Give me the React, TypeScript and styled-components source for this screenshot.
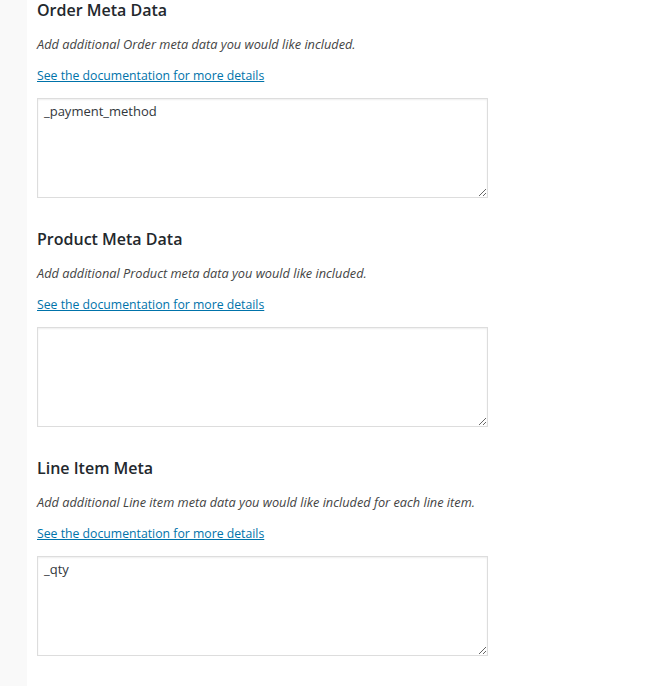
import React from "react";
import styled, {createGlobalStyle} from "styled-components";

const GlobalStyle = createGlobalStyle`
  html, body {
    margin: 0;
    padding: 0;
    background: #fff;
  }
  body {
    font-family: "Open Sans", "Noto Sans", sans-serif;
    color: #444;
  }
`;

type MetaSection = {
  title: string;
  description: string;
  value: string;
};

const sections: MetaSection[] = [
  {
    title: "Order Meta Data",
    description: "Add additional Order meta data you would like included.",
    value: "_payment_method",
  },
  {
    title: "Product Meta Data",
    description: "Add additional Product meta data you would like included.",
    value: "",
  },
  {
    title: "Line Item Meta",
    description:
      "Add additional Line item meta data you would like included for each line item.",
    value: "_qty",
  },
];

export default function App() {
  return (
    <>
      <GlobalStyle />
      <Page>
        <Sidebar />
        <Content>
          {sections.map((s) => (
            <Section key={s.title}>
              <Title>{s.title}</Title>
              <Description>{s.description}</Description>
              <DocLink href="#">See the documentation for more details</DocLink>
              <MetaField defaultValue={s.value} />
            </Section>
          ))}
        </Content>
      </Page>
    </>
  );
}

const Page = styled.div`
  display: flex;
  min-height: 686px;
`;

const Sidebar = styled.div`
  width: 27px;
  flex-shrink: 0;
  background: #f9f9f9;
`;

const Content = styled.div`
  flex: 1;
  padding: 0 0 0 10px;
  display: flex;
  flex-direction: column;
  gap: 31px;
`;

const Section = styled.div`
  display: flex;
  flex-direction: column;
  align-items: flex-start;
`;

const Title = styled.h2`
  margin: 0;
  font-size: 16px;
  line-height: 20px;
  font-weight: 600;
  color: #23282d;
`;

const Description = styled.p`
  margin: 14px 0 0;
  font-size: 12.75px;
  line-height: 20px;
  font-style: italic;
  color: #444;
`;

const DocLink = styled.a`
  margin-top: 12px;
  font-size: 12.25px;
  line-height: 20px;
  color: #0073aa;
  text-decoration: underline;
`;

const MetaField = styled.textarea`
  box-sizing: border-box;
  margin-top: 12px;
  width: 451px;
  height: 100px;
  padding: 2px 6px;
  border: 1px solid #ddd;
  box-shadow: inset 0 1px 2px rgba(0, 0, 0, 0.07);
  background: #fff;
  color: #32373c;
  font-family: "Open Sans", "Noto Sans", sans-serif;
  font-size: 13px;
  line-height: 20px;
  outline: none;
`;
